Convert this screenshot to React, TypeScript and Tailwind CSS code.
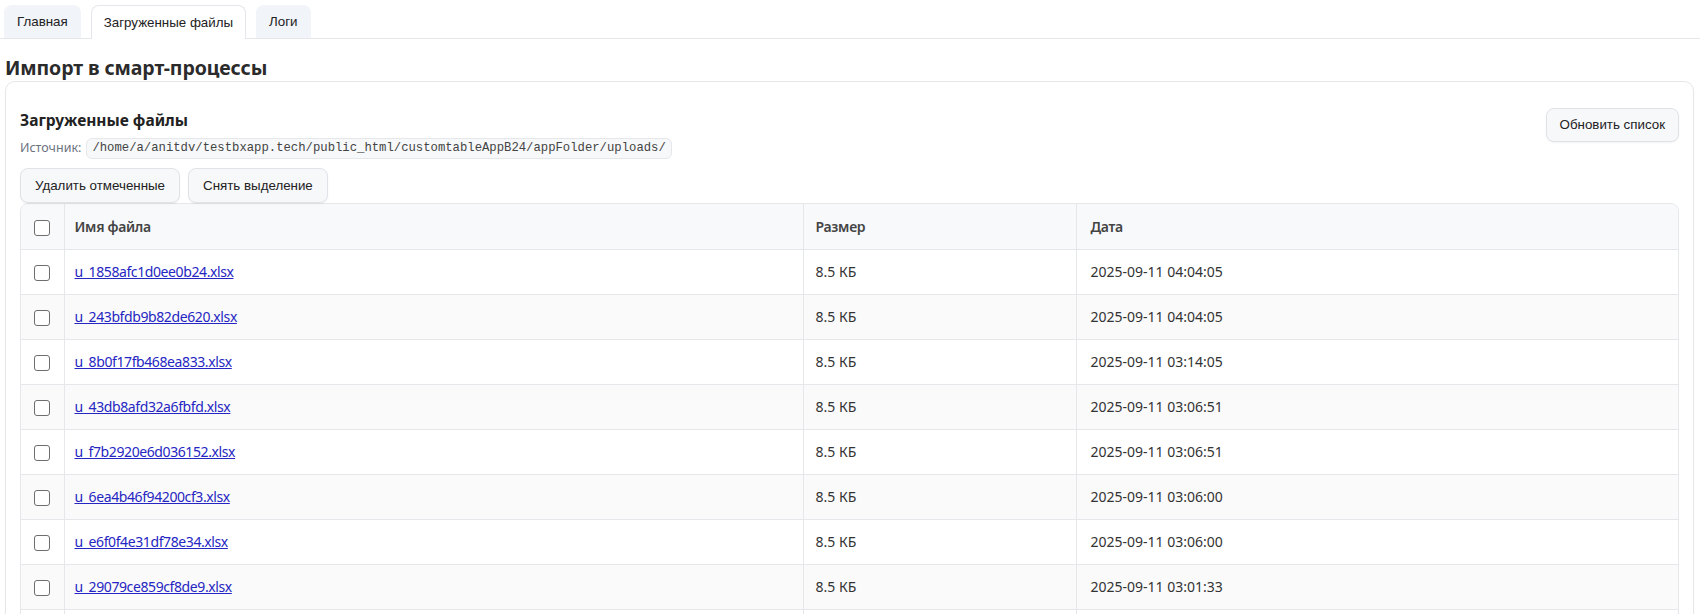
import React from "react";

const files = [
  ["u_1858afc1d0ee0b24.xlsx", "8.5 КБ", "2025-09-11 04:04:05"],
  ["u_243bfdb9b82de620.xlsx", "8.5 КБ", "2025-09-11 04:04:05"],
  ["u_8b0f17fb468ea833.xlsx", "8.5 КБ", "2025-09-11 03:14:05"],
  ["u_43db8afd32a6fbfd.xlsx", "8.5 КБ", "2025-09-11 03:06:51"],
  ["u_f7b2920e6d036152.xlsx", "8.5 КБ", "2025-09-11 03:06:51"],
  ["u_6ea4b46f94200cf3.xlsx", "8.5 КБ", "2025-09-11 03:06:00"],
  ["u_e6f0f4e31df78e34.xlsx", "8.5 КБ", "2025-09-11 03:06:00"],
  ["u_29079ce859cf8de9.xlsx", "8.5 КБ", "2025-09-11 03:01:33"],
  ["u_a1c0b3e4f5d6a7b8.xlsx", "8.5 КБ", "2025-09-11 02:58:12"],
  ["u_b2d4e6f8a0c1e3f5.xlsx", "8.5 КБ", "2025-09-11 02:50:41"],
];

function Box() {
  return (
    <span className="inline-block w-4 h-4 rounded-[3px] border-[1.5px] border-[#6e6e6e] bg-white align-middle" />
  );
}

export default function App() {
  return (
    <div
      className="min-h-screen bg-white text-[#333]"
      style={{ fontFamily: '"Noto Sans", "Open Sans", sans-serif' }}
    >
      {/* Tabs */}
      <div className="flex gap-[10px] pl-[4px] pt-[5px] border-b border-[#e5e7eb]">
        <button
          className="h-[33px] px-[13px] rounded-t-[8px] bg-[#f1f4f8] text-[13.33px] text-[#222]"
          style={{ fontFamily: '"Liberation Sans", Arial, sans-serif' }}
        >
          Главная
        </button>
        <button
          className="h-[34px] -mb-px px-[12px] rounded-t-[8px] bg-white border border-b-0 border-[#e3e6ea] text-[13.33px] text-[#222]"
          style={{ fontFamily: '"Liberation Sans", Arial, sans-serif' }}
        >
          Загруженные файлы
        </button>
        <button
          className="h-[33px] px-[13px] rounded-t-[8px] bg-[#f1f4f8] text-[13.33px] text-[#222]"
          style={{ fontFamily: '"Liberation Sans", Arial, sans-serif' }}
        >
          Логи
        </button>
      </div>

      <h1 className="mt-[15px] ml-[5px] text-[19.5px] leading-[28px] font-bold text-[#2b2b2b] tracking-[-0.1px]">
        Импорт в смарт-процессы
      </h1>

      {/* Card */}
      <div className="mt-[-1px] ml-[5px] mr-[6px] border border-[#e5e7eb] rounded-[10px] bg-white shadow-[0_1px_2px_rgba(0,0,0,0.04)] pt-[26px] pl-[14px] pr-[14px] pb-4">
        <div className="flex justify-between items-start">
          <div>
            <div className="text-[15.5px] leading-[24px] font-bold text-[#222]">
              Загруженные файлы
            </div>
            <div className="mt-[6px] flex items-center gap-[5px] text-[12.5px] text-[#6b7280]">
              <span>Источник:</span>
              <code
                className="px-[5px] h-[21px] leading-[19px] inline-block rounded-[6px] border border-[#e5e7eb] bg-[#f7f8fa] text-[12.25px] text-[#444]"
                style={{ fontFamily: '"Liberation Mono", "DejaVu Sans Mono", monospace' }}
              >
                /home/a/anitdv/testbxapp.tech/public_html/customtableAppB24/appFolder/uploads/
              </code>
            </div>
          </div>
          <button
            className="h-[34px] px-[13px] rounded-[8px] border border-[#dfe3e8] bg-[#f7f8fa] shadow-[0_1px_2px_rgba(0,0,0,0.05)] text-[13.33px] text-[#222]"
            style={{ fontFamily: '"Liberation Sans", Arial, sans-serif' }}
          >
            Обновить список
          </button>
        </div>

        <div className="mt-[9px] flex gap-[8px]">
          <button
            className="h-[35px] px-[14px] rounded-[8px] border border-[#dfe3e8] bg-[#f7f8fa] shadow-[0_1px_2px_rgba(0,0,0,0.05)] text-[13.33px] text-[#222]"
            style={{ fontFamily: '"Liberation Sans", Arial, sans-serif' }}
          >
            Удалить отмеченные
          </button>
          <button
            className="h-[35px] px-[14px] rounded-[8px] border border-[#dfe3e8] bg-[#f7f8fa] shadow-[0_1px_2px_rgba(0,0,0,0.05)] text-[13.33px] text-[#222]"
            style={{ fontFamily: '"Liberation Sans", Arial, sans-serif' }}
          >
            Снять выделение
          </button>
        </div>

        <div className="mt-0 border border-[#e5e7eb] rounded-[8px] overflow-hidden">
          <table className="w-full table-fixed border-collapse text-[14px]">
            <colgroup>
              <col className="w-[43px]" />
              <col className="w-[739px]" />
              <col className="w-[273px]" />
              <col />
            </colgroup>
            <thead>
              <tr className="h-[45px] bg-[#f8f9fb]">
                <th className="text-center border-r border-[#e5e7eb]">
                  <Box />
                </th>
                <th className="text-left px-[10px] font-semibold text-[#444] tracking-[-0.3px] border-r border-[#e5e7eb]">
                  Имя файла
                </th>
                <th className="text-left px-[12px] font-semibold text-[#444] tracking-[-0.3px] border-r border-[#e5e7eb]">
                  Размер
                </th>
                <th className="text-left px-[14px] font-semibold text-[#444] tracking-[-0.3px]">
                  Дата
                </th>
              </tr>
            </thead>
            <tbody>
              {files.map((f, i) => (
                <tr
                  key={f[0]}
                  className={
                    "h-[45px] border-t border-[#e5e7eb] " +
                    (i % 2 === 1 ? "bg-[#fafafa]" : "bg-white")
                  }
                >
                  <td className="text-center border-r border-[#e5e7eb]">
                    <Box />
                  </td>
                  <td className="px-[10px] border-r border-[#e5e7eb]">
                    <a href="#" className="text-[#2626c2] underline tracking-[-0.4px]">
                      {f[0]}
                    </a>
                  </td>
                  <td className="px-[12px] text-[#333] border-r border-[#e5e7eb]">
                    {f[1]}
                  </td>
                  <td className="px-[14px] text-[#333]">{f[2]}</td>
                </tr>
              ))}
            </tbody>
          </table>
        </div>
      </div>
    </div>
  );
}
